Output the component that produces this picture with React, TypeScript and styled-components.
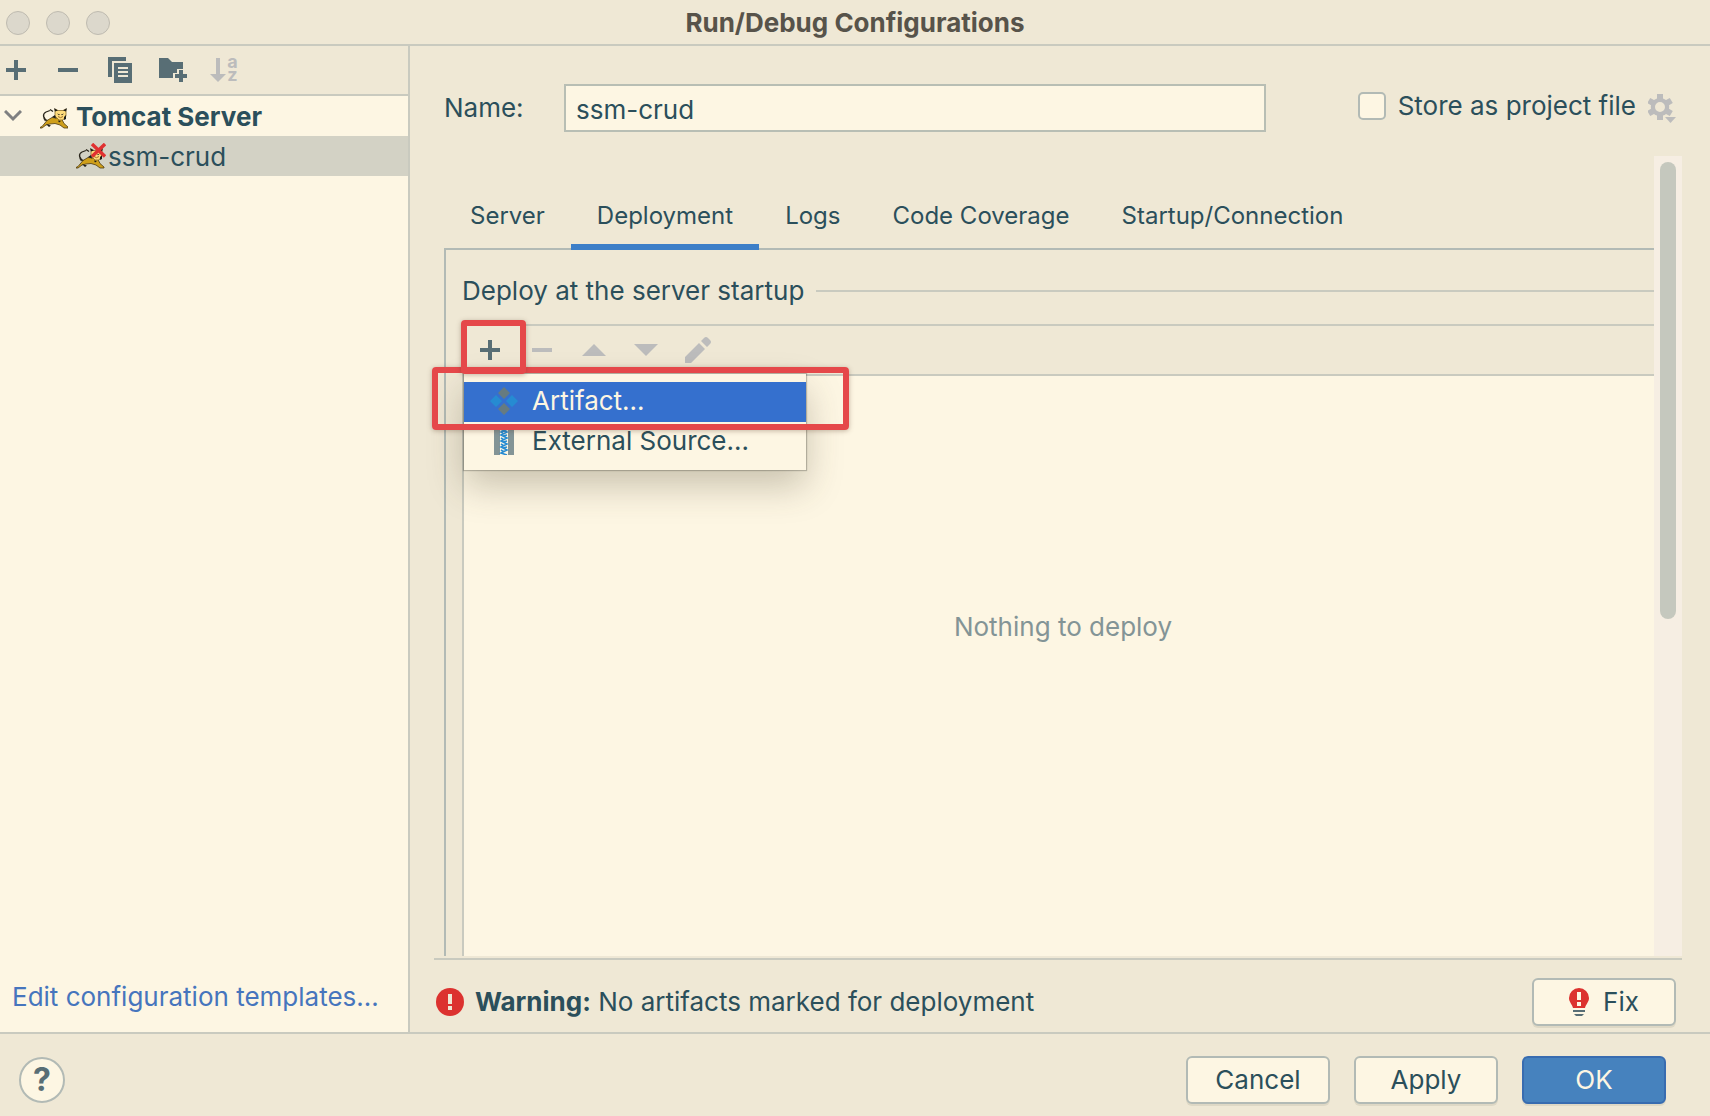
import React from 'react';
import styled, { createGlobalStyle, css } from 'styled-components';

const c = {
  bg: '#efe8d5',
  paper: '#fdf6e3',
  text: '#2b4f5b',
  icon: '#586e75',
  iconOff: '#bcbcbc',
  line: '#c9cabf',
  edge: '#b2bab5',
  accent: '#3d7fc8',
  red: '#e5484a',
};

const GlobalStyle = createGlobalStyle`
  *, *::before, *::after { box-sizing: border-box; }
  body { margin: 0; background: ${c.bg}; }
  button, input { font: inherit; color: inherit; }
  svg { display: block; flex: none; }
`;

const Window = styled.div`
  display: flex;
  flex-direction: column;
  height: 100vh;
  background: ${c.bg};
  color: ${c.text};
  font: 400 26px/30px Inter, 'Liberation Sans', sans-serif;
  overflow: hidden;
`;

const TitleBar = styled.header`
  display: grid;
  grid-template-columns: 1fr auto 1fr;
  align-items: center;
  flex: none;
  height: 46px;
  padding: 2px 6px 0;
  border-bottom: 2px solid ${c.line};
`;

const Lights = styled.div`
  display: flex;
  gap: 16px;
`;

const Light = styled.button`
  width: 24px;
  height: 24px;
  padding: 0;
  border: 1px solid #bfbbb0;
  border-radius: 50%;
  background: #dcd8cc;
`;

const Title = styled.h1`
  margin: 0;
  font-size: 26px;
  line-height: 30px;
  font-weight: 700;
  color: #57534a;
`;

const Body = styled.div`
  display: flex;
  flex: 1;
  min-height: 0;
`;

const Sidebar = styled.aside`
  display: flex;
  flex-direction: column;
  flex: none;
  width: 410px;
  border-right: 2px solid ${c.line};
  background: ${c.paper};
`;

const SideTools = styled.div`
  display: flex;
  gap: 22px;
  height: 50px;
  padding-left: 1px;
  background: ${c.bg};
  border-bottom: 2px solid ${c.line};
`;

const IconButton = styled.button<{ $width: number }>`
  display: flex;
  align-items: center;
  justify-content: center;
  width: ${(p) => p.$width}px;
  height: 48px;
  padding: 0;
  border: 0;
  background: none;
  color: ${c.icon};
  &:disabled { color: ${c.iconOff}; }
`;

const Tree = styled.ul`
  flex: 1;
  margin: 0;
  padding: 0;
  list-style: none;
`;

const TreeRow = styled.li<{ $child?: boolean }>`
  display: flex;
  align-items: center;
  height: 40px;
  gap: ${(p) => (p.$child ? 2 : 8)}px;
  padding-top: 2px;
  padding-left: ${(p) => (p.$child ? 76 : 4)}px;
  font-weight: ${(p) => (p.$child ? 400 : 700)};
  background: ${(p) => (p.$child ? '#d3d2c5' : 'none')};
`;

const Chevron = styled.svg`
  margin-right: 10px;
`;

const TemplatesLink = styled.a`
  padding: 0 12px 20px;
  color: #4675bd;
  text-decoration: none;
  white-space: nowrap;
`;

const Main = styled.main`
  display: flex;
  flex-direction: column;
  flex: 1;
  min-width: 0;
  padding: 38px 28px 0 24px;
`;

const NameRow = styled.div`
  display: flex;
  align-items: center;
  height: 48px;
  margin-bottom: 24px;
  padding-left: 10px;
`;

const NameLabel = styled.label`
  width: 120px;
`;

const NameInput = styled.input`
  flex: 1;
  min-width: 0;
  height: 48px;
  padding: 2px 10px 0;
  border: 2px solid #b8beb4;
  border-radius: 0;
  background: ${c.paper};
  outline: none;
`;

const StoreLabel = styled.label`
  display: flex;
  align-items: center;
  gap: 12px;
  margin-left: 92px;
  padding-bottom: 4px;
  white-space: nowrap;
`;

const CheckBox = styled.input`
  appearance: none;
  width: 28px;
  height: 28px;
  margin: 0;
  border: 2px solid ${c.edge};
  border-radius: 5px;
  background: ${c.paper};
`;

const GearButton = styled.button`
  margin: 0 6px 0 12px;
  padding: 2px 0 0;
  border: 0;
  background: none;
  color: ${c.iconOff};
`;

const Scroller = styled.section`
  display: flex;
  flex: 1;
  min-height: 0;
  padding: 0 0 2px 10px;
  border-bottom: 2px solid ${c.line};
`;

const Content = styled.div`
  display: flex;
  flex-direction: column;
  flex: 1;
  min-width: 0;
`;

const ScrollTrack = styled.div`
  width: 28px;
  padding: 6px;
  background: #f6eee3;
`;

const ScrollThumb = styled.div`
  height: 58%;
  border-radius: 8px;
  background: #c5c8be;
`;

const Tabs = styled.div`
  display: flex;
  height: 94px;
  padding-top: 26px;
`;

const Tab = styled.button<{ $active?: boolean }>`
  position: relative;
  z-index: 1;
  padding: 6px 26px 0;
  border: 0;
  border-bottom: 6px solid ${(p) => (p.$active ? c.accent : 'transparent')};
  background: none;
  font-size: 24px;
  white-space: nowrap;
`;

const Panel = styled.div`
  display: flex;
  flex-direction: column;
  flex: 1;
  margin-top: -2px;
  padding: 26px 0 0 16px;
  border: solid ${c.edge};
  border-width: 2px 0 0 2px;
`;

const GroupTitle = styled.h2`
  display: flex;
  align-items: center;
  gap: 12px;
  margin: 0 0 18px;
  font-size: 26px;
  line-height: 30px;
  font-weight: 400;
  &::after {
    content: '';
    flex: 1;
    height: 2px;
    background: ${c.line};
  }
`;

const ListBox = styled.div`
  display: flex;
  flex-direction: column;
  flex: 1;
  border-left: 2px solid ${c.line};
`;

const ListTools = styled.div`
  display: flex;
  height: 52px;
  border: solid ${c.line};
  border-width: 2px 0;
`;

const Empty = styled.div`
  flex: 1;
  padding: 236px 0 0 8px;
  background: ${c.paper};
  color: #839496;
  text-align: center;
`;

const AddAnchor = styled.div`
  position: relative;
`;

const frame = css`
  position: absolute;
  border: 6px solid ${c.red};
  border-radius: 4px;
  box-shadow: 0 1px 5px rgba(90, 60, 40, 0.35);
  pointer-events: none;
`;

const ButtonFrame = styled.span`
  ${frame}
  z-index: 3;
  inset: -6px -10px 0 -3px;
`;

const MenuFrame = styled.span`
  ${frame}
  inset: -7px -43px auto -32px;
  height: 63px;
`;

const Menu = styled.div`
  position: absolute;
  z-index: 2;
  top: 100%;
  left: 0;
  width: 342px;
  padding: 8px 0;
  background: ${c.paper};
  box-shadow: 0 0 1px 1px rgba(60, 60, 50, 0.3), 0 16px 36px rgba(70, 60, 40, 0.28);
`;

const MenuItem = styled.button<{ $active?: boolean }>`
  display: flex;
  align-items: center;
  gap: 14px;
  width: 100%;
  height: 40px;
  padding: 0 26px 2px;
  border: 0;
  background: ${(p) => (p.$active ? '#3570ce' : 'none')};
  color: ${(p) => (p.$active ? c.paper : c.text)};
`;

const WarningRow = styled.div`
  display: flex;
  align-items: center;
  justify-content: space-between;
  height: 72px;
  padding: 12px 6px 0 2px;
`;

const WarningText = styled.p`
  display: flex;
  align-items: center;
  gap: 11px;
  margin: 0;
`;

const PushButton = styled.button<{ $primary?: boolean }>`
  display: flex;
  align-items: center;
  justify-content: center;
  gap: 14px;
  width: 144px;
  height: 48px;
  padding: 0;
  border: 2px solid ${(p) => (p.$primary ? '#386cb0' : c.edge)};
  border-radius: 6px;
  background: ${(p) => (p.$primary ? '#4682be' : c.paper)};
  color: ${(p) => (p.$primary ? c.paper : c.text)};
  box-shadow: 0 2px 0 rgba(120, 120, 100, 0.14);
`;

const Footer = styled.footer`
  display: flex;
  align-items: center;
  gap: 24px;
  flex: none;
  height: 84px;
  padding: 14px 44px 4px 19px;
  border-top: 2px solid ${c.line};
`;

const HelpButton = styled.button`
  width: 46px;
  height: 46px;
  margin-right: auto;
  padding: 0;
  border: 2px solid ${c.edge};
  border-radius: 50%;
  background: ${c.paper};
  color: ${c.icon};
  font-size: 32px;
  font-weight: 700;
`;

const Plus = () => (
  <svg width="20" height="20" fill="currentColor">
    <path d="M8 0h4v8h8v4h-8v8H8v-8H0V8h8z" />
  </svg>
);

const Minus = () => (
  <svg width="20" height="20" fill="currentColor">
    <path d="M0 8h20v4H0z" />
  </svg>
);

const Copy = () => (
  <svg width="24" height="26" fill="currentColor">
    <path d="M0 0h18v4H4v16H0z" />
    <path fillRule="evenodd" d="M6 6h18v20H6zM10 10v2h10v-2zm0 4v2h10v-2zm0 4v2h10v-2z" />
  </svg>
);

const FolderAdd = () => (
  <svg width="30" height="24" viewBox="-2 0 30 24" fill="currentColor">
    <path d="M0 0h9l4 4h11v7h-6v4h-4v5H0z" />
    <path d="M20 12h4v4h4v4h-4v4h-4v-4h-4v-4h4z" />
  </svg>
);

const SortLetters = styled.span`
  margin: 0 0 4px 1px;
  font: 700 18px/13px Inter, sans-serif;
`;

const Gear = () => (
  <svg width="28" height="30" fill="currentColor">
    <g transform="translate(12 13)">
      <path
        fillRule="evenodd"
        d="M-3-13h6v4.400a9 9 0 0 1 3 1.700l3.800-2.200 3 5.200L9-1.700a9 9 0 0 1 0 3.400l3.800 2.200-3 5.200L6 6.900a9 9 0 0 1-3 1.700V13h-6V8.600a9 9 0 0 1-3-1.700l-3.800 2.200-3-5.200L-9 1.700a9 9 0 0 1 0-3.400l-3.800-2.200 3-5.200L-6-6.900a9 9 0 0 1 3-1.700zM0-5a5 5 0 1 0 0 10A5 5 0 0 0 0-5z"
      />
    </g>
    <path d="M15 22h14l-7 7z" fill={c.bg} />
    <path d="M17 23h11l-5.500 6z" />
  </svg>
);

const Cat = ({ broken }: { broken?: boolean }) => (
  <svg width={broken ? 30 : 28} height="28">
    <path d="M8 18C3 16 2 11 6 9l4-1.500M10 6.500l3 2" fill="none" stroke="#2a261c" strokeWidth="1.300" />
    <path
      d="M0 24.500l2-1 5-6 5-3 5 .5 5 1.500 2 4 4 3.500v1h-4l-4-3-5-1.500-5 .5-4 1-4 3H0z"
      fill="#cf9f1a"
      stroke="#4c3a12"
      strokeWidth=".8"
    />
    <path d="M15 6l3 1.500h5L26 6v7l-3 4h-4l-4-4z" fill="#ffdc7c" stroke="#8a6d2c" strokeWidth=".8" />
    <path d="M14 5l4 2.500-3 1zM27 5l-4 2.500 3 1zM17 10.500l3 1-1 .8zM24 10.500l-3 1 1 .8z" fill="#1c1c18" />
    <path d="M18 13.500l2.500 1.200 2.500-1.200" fill="none" stroke="#a3722b" />
    <path d="M3 15l3 2.500-1 .8zM12 14l3-2 1 3.500zM24 14l2-2v4l-2 1zM6 21l5 1.500-2 1.500zM18 17.500l3 .5-2 1.500z" fill="#1c1c18" />
    {broken && <path d="M16 1l13 12.500M29 1L16 13.500" stroke="#e03131" strokeWidth="3.400" />}
  </svg>
);

const Artifact = () => (
  <svg width="28" height="28">
    <path d="M14 0l6 6-6 6-6-6zM14 16l6 6-6 6-6-6z" fill="#667b80" />
    <path d="M6 8l6 6-6 6-6-6zM22 8l6 6-6 6-6-6z" fill="#268bd2" />
  </svg>
);

const Archive = () => (
  <svg width="28" height="28">
    <path d="M4 1h6v27H4zM18 1h6v27h-6z" fill="#839496" />
    <path
      d="M10 2l7 3-6 3 6 3-6 3 6 3-6 3 6 3-6 3 6 2M18 2l-7 3 2 1M17 8l-4 1M11 11l3 2M17 14l-4 1M11 17l3 2M17 20l-4 1M11 23l3 2"
      fill="none"
      stroke="#268bd2"
      strokeWidth="1.600"
    />
  </svg>
);

const ErrorMark = () => (
  <svg width="28" height="28">
    <circle cx="14" cy="14" r="14" fill="#dc322f" />
    <path d="M12 6h4v10h-4zM12 18h4v4h-4z" fill={c.bg} />
  </svg>
);

const Bulb = () => (
  <svg width="20" height="28">
    <path d="M10 0a10 10 0 0 1 10 10c0 4-3 6-4 10H4C3 16 0 14 0 10A10 10 0 0 1 10 0z" fill="#dc322f" />
    <path d="M8 4h4v8H8zM8 14h4v4H8z" fill={c.paper} />
    <path d="M4 22h12v2H4zM5 26h10l-2 2H7z" fill={c.icon} />
  </svg>
);

const tabs = ['Server', 'Deployment', 'Logs', 'Code Coverage', 'Startup/Connection'];

export default function App() {
  return (
    <>
      <GlobalStyle />
      <Window>
        <TitleBar>
          <Lights>
            <Light aria-label="Close" />
            <Light aria-label="Minimize" />
            <Light aria-label="Zoom" />
          </Lights>
          <Title>Run/Debug Configurations</Title>
        </TitleBar>
        <Body>
          <Sidebar>
            <SideTools>
              <IconButton $width={30} aria-label="Add configuration"><Plus /></IconButton>
              <IconButton $width={30} aria-label="Remove configuration"><Minus /></IconButton>
              <IconButton $width={30} aria-label="Copy configuration"><Copy /></IconButton>
              <IconButton $width={30} aria-label="New folder"><FolderAdd /></IconButton>
              <IconButton $width={30} aria-label="Sort configurations" disabled>
                <svg width="16" height="24" fill="currentColor">
                  <path d="M6 0h4v16h6l-8 8-8-8h6z" />
                </svg>
                <SortLetters>a<br />z</SortLetters>
              </IconButton>
            </SideTools>
            <Tree>
              <TreeRow>
                <Chevron width="18" height="14" fill="none" stroke="#7f8081" strokeWidth="3">
                  <path d="M1 1l8 8 8-8" />
                </Chevron>
                <Cat />
                <span>Tomcat Server</span>
              </TreeRow>
              <TreeRow $child>
                <Cat broken />
                <span>ssm-crud</span>
              </TreeRow>
            </Tree>
            <TemplatesLink href="#templates">Edit configuration templates...</TemplatesLink>
          </Sidebar>
          <Main>
            <NameRow>
              <NameLabel htmlFor="name">Name:</NameLabel>
              <NameInput id="name" defaultValue="ssm-crud" />
              <StoreLabel>
                <CheckBox type="checkbox" />
                Store as project file
              </StoreLabel>
              <GearButton aria-label="Storage options"><Gear /></GearButton>
            </NameRow>
            <Scroller>
              <Content>
                <Tabs role="tablist">
                  {tabs.map((t) => (
                    <Tab key={t} role="tab" aria-selected={t === 'Deployment'} $active={t === 'Deployment'}>
                      {t}
                    </Tab>
                  ))}
                </Tabs>
                <Panel>
                  <GroupTitle>Deploy at the server startup</GroupTitle>
                  <ListBox>
                    <ListTools>
                      <AddAnchor>
                        <IconButton $width={52} aria-label="Add"><Plus /></IconButton>
                        <ButtonFrame />
                        <Menu role="menu">
                          <MenuItem role="menuitem" $active><Artifact />Artifact...</MenuItem>
                          <MenuItem role="menuitem"><Archive />External Source...</MenuItem>
                          <MenuFrame />
                        </Menu>
                      </AddAnchor>
                      <IconButton $width={52} aria-label="Remove" disabled><Minus /></IconButton>
                      <IconButton $width={52} aria-label="Move up" disabled>
                        <svg width="24" height="12" fill="currentColor"><path d="M12 0l12 12H0z" /></svg>
                      </IconButton>
                      <IconButton $width={52} aria-label="Move down" disabled>
                        <svg width="24" height="12" fill="currentColor"><path d="M0 0h24L12 12z" /></svg>
                      </IconButton>
                      <IconButton $width={52} aria-label="Edit" disabled>
                        <svg width="26" height="26" fill="currentColor">
                          <path d="M0 20L14 6l6 6L6 26H0zM16 4l3-3q2-2 4 0l2 2q2 2 0 4l-3 3z" />
                        </svg>
                      </IconButton>
                    </ListTools>
                    <Empty>Nothing to deploy</Empty>
                  </ListBox>
                </Panel>
              </Content>
              <ScrollTrack><ScrollThumb /></ScrollTrack>
            </Scroller>
            <WarningRow>
              <WarningText>
                <ErrorMark />
                <span><b>Warning:</b> No artifacts marked for deployment</span>
              </WarningText>
              <PushButton><Bulb />Fix</PushButton>
            </WarningRow>
          </Main>
        </Body>
        <Footer>
          <HelpButton aria-label="Help">?</HelpButton>
          <PushButton>Cancel</PushButton>
          <PushButton>Apply</PushButton>
          <PushButton $primary>OK</PushButton>
        </Footer>
      </Window>
    </>
  );
}
